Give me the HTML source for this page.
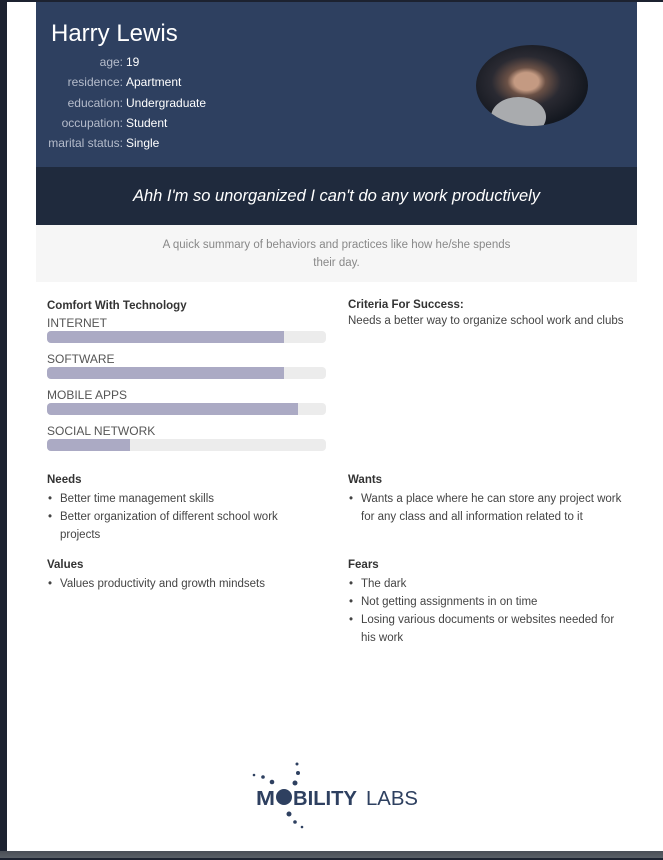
<!DOCTYPE html>
<html><head><meta charset="utf-8"><style>
*{margin:0;padding:0;box-sizing:border-box}
body{width:663px;height:860px;background:#1c2230;position:relative;overflow:hidden;font-family:"Liberation Sans",sans-serif}
.page{position:absolute;left:7px;top:2px;width:656px;height:849px;background:#fff}
.gbar{position:absolute;left:0;top:851px;width:663px;height:7px;background:linear-gradient(#4a4f57,#5a5f66)}
.hdr{position:absolute;left:36px;top:2px;width:601px;height:165px;background:#2e4060;color:#fff}
.name{position:absolute;left:15px;top:18px;font-size:24px}
.rows{position:absolute;left:0;top:50px;font-size:12px;line-height:20.3px}
.rows div{display:flex}
.rows .k{width:87px;text-align:right;color:#b5bccb}
.rows .v{margin-left:3px}
.photo{position:absolute;left:440px;top:43px;width:112px;height:81px;border-radius:50%;background:radial-gradient(ellipse at 45% 45%,#c49a82 0 14%,#6b5146 22%,#2a2a32 40%,#141820 70%);overflow:hidden}
.photo:after{content:"";position:absolute;left:15px;top:52px;width:55px;height:40px;border-radius:50%;background:#a9abae}
.quote{position:absolute;left:36px;top:167px;width:601px;height:58px;background:#1f2a3d;color:#fff;font-style:italic;font-size:16.5px;text-align:center;line-height:58px}
.sum{position:absolute;left:36px;top:225px;width:601px;height:57px;background:#f6f6f6;color:#888;font-size:11.5px;text-align:center;padding-top:11px;line-height:18px}
.sec{position:absolute;font-size:11.5px;color:#444}
.sec b{display:block;color:#333;margin-bottom:4px}
.lbl{color:#555;font-size:12px;line-height:14px}
.bar{width:279px;height:12px;border-radius:4px;background:#ececec;margin:1px 0 9px}
.bar i{display:block;height:12px;border-radius:4px 0 0 4px;background:#abaac4}
ul{list-style:none}
li{position:relative;padding-left:13px;line-height:18px}
li:before{content:"•";position:absolute;left:1px}
</style></head><body>
<div class="page"></div>
<div class="gbar"></div>
<div class="hdr">
<div class="name">Harry Lewis</div>
<div class="rows">
<div><span class="k">age:</span><span class="v">19</span></div>
<div><span class="k">residence:</span><span class="v">Apartment</span></div>
<div><span class="k">education:</span><span class="v">Undergraduate</span></div>
<div><span class="k">occupation:</span><span class="v">Student</span></div>
<div><span class="k">marital status:</span><span class="v">Single</span></div>
</div>
<div class="photo"></div>
</div>
<div class="quote">Ahh I'm so unorganized I can't do any work productively</div>
<div class="sum">A quick summary of behaviors and practices like how he/she spends<br>their day.</div>
<div class="sec" style="left:47px;top:300px">
<b>Comfort With Technology</b>
<div class="lbl">INTERNET</div><div class="bar"><i style="width:237px"></i></div>
<div class="lbl">SOFTWARE</div><div class="bar"><i style="width:237px"></i></div>
<div class="lbl">MOBILE APPS</div><div class="bar"><i style="width:251px"></i></div>
<div class="lbl">SOCIAL NETWORK</div><div class="bar"><i style="width:83px"></i></div>
</div>
<div class="sec" style="left:348px;top:299px"><b>Criteria For Success:</b>Needs a better way to organize school work and clubs</div>
<div class="sec" style="left:47px;top:474px;width:260px"><b>Needs</b><ul><li>Better time management skills</li><li>Better organization of different school work projects</li></ul></div>
<div class="sec" style="left:348px;top:474px;width:280px"><b>Wants</b><ul><li>Wants a place where he can store any project work for any class and all information related to it</li></ul></div>
<div class="sec" style="left:47px;top:559px"><b>Values</b><ul><li>Values productivity and growth mindsets</li></ul></div>
<div class="sec" style="left:348px;top:559px;width:280px"><b>Fears</b><ul><li>The dark</li><li>Not getting assignments in on time</li><li>Losing various documents or websites needed for his work</li></ul></div>
<svg style="position:absolute;left:230px;top:750px" width="200" height="90">
<g fill="#2e4060">
<circle cx="67" cy="14" r="1.5"/><circle cx="68" cy="23" r="2"/><circle cx="65" cy="33" r="2.5"/>
<circle cx="24" cy="25" r="1.3"/><circle cx="33" cy="27" r="1.8"/><circle cx="42" cy="32" r="2.3"/>
<circle cx="59" cy="64" r="2.5"/><circle cx="65" cy="72" r="1.8"/><circle cx="72" cy="77" r="1.3"/>
<circle cx="54" cy="47" r="8"/>
<text x="26" y="55" font-family="Liberation Sans,sans-serif" font-weight="bold" font-size="20" fill="#2e4060" textLength="19" lengthAdjust="spacingAndGlyphs">M</text>
<text x="63" y="55" font-family="Liberation Sans,sans-serif" font-weight="bold" font-size="20" fill="#2e4060" textLength="64" lengthAdjust="spacingAndGlyphs">BILITY</text>
<text x="136" y="55" font-family="Liberation Sans,sans-serif" font-size="20" fill="#2e4060" textLength="52" lengthAdjust="spacingAndGlyphs">LABS</text>
</g></svg>
</body></html>
